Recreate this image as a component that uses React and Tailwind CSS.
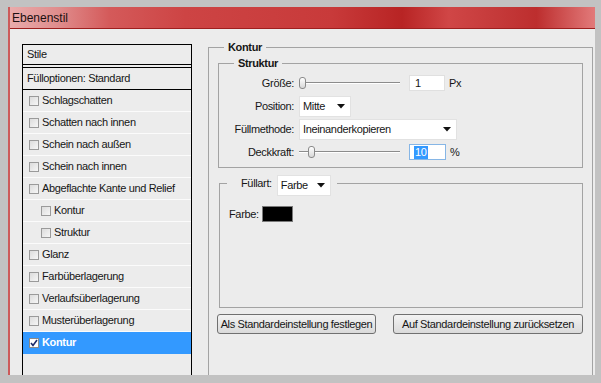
import React from "react";

const txt = "text-[11px] tracking-[-0.35px] text-[#161616]";

function Box({ checked }) {
  if (checked) {
    return (
      <span className="w-[10px] h-[10px] border border-[#8a8a8a] bg-white flex items-center justify-center shrink-0">
        <svg width="8" height="8" viewBox="0 0 8 8">
          <path d="M1 4 L3 6.5 L7 1" stroke="#1b2a6b" strokeWidth="1.6" fill="none" />
        </svg>
      </span>
    );
  }
  return (
    <span className="w-[10px] h-[10px] border border-[#9a9a9a] bg-gradient-to-br from-[#dcdcdc] to-[#f6f6f6] shrink-0" />
  );
}

function StyleRow({ label, indent, selected }) {
  return (
    <div
      className={`h-[22px] flex items-center gap-[3px] border-b ${
        selected ? "bg-[#3399ff] border-[#3399ff] text-white font-bold" : "border-[#fbfbfb] text-[#161616]"
      } ${indent ? "pl-[18px]" : "pl-[6px]"} text-[11px] tracking-[-0.35px]`}
    >
      <Box checked={selected} />
      <span>{label}</span>
    </div>
  );
}

function Arrow() {
  return (
    <svg width="8" height="5" viewBox="0 0 8 5" className="shrink-0">
      <path d="M0 0 H8 L4 4.5 Z" fill="#111" />
    </svg>
  );
}

function Select({ value, width }) {
  return (
    <div className={`${width} h-[21px] bg-white border border-[#e2e2e2] flex items-center justify-between pl-[3px] pr-[5px] ${txt}`}>
      <span>{value}</span>
      <Arrow />
    </div>
  );
}

function Slider({ thumb }) {
  return (
    <div className="relative w-[101px] h-[14px] flex items-center">
      <div className="w-full h-[2px] border-t border-[#8c8c8c] border-b border-b-white" />
      <div
        className="absolute top-[1px] w-[7px] h-[12px] rounded-[3px] border border-[#8a8a8a] bg-gradient-to-b from-white to-[#d8d8d8]"
        style={{ left: thumb }}
      />
    </div>
  );
}

function Label({ children }) {
  return <div className={`w-[75px] text-right ${txt}`}>{children}</div>;
}

export default function App() {
  const styles = [
    { label: "Schlagschatten" },
    { label: "Schatten nach innen" },
    { label: "Schein nach außen" },
    { label: "Schein nach innen" },
    { label: "Abgeflachte Kante und Relief" },
    { label: "Kontur", indent: true },
    { label: "Struktur", indent: true },
    { label: "Glanz" },
    { label: "Farbüberlagerung" },
    { label: "Verlaufsüberlagerung" },
    { label: "Musterüberlagerung" },
    { label: "Kontur", selected: true },
  ];

  return (
    <div className="w-[601px] h-[383px] bg-[#c2c2c2] pt-[7px] pl-[8px] pr-[8px] pb-[8px] flex font-['Liberation_Sans',Arial,sans-serif]">
      <div className="flex-1 flex flex-col border-l-2 border-[#cc5a5a]">
        {/* Titelleiste */}
        <div className="h-[22px] shrink-0 flex items-center pl-[2px] border-b border-[#9e1f1f] bg-[linear-gradient(to_right,#e9abab_0%,#e08e8e_8%,#d45a5a_17%,#cd4444_30%,#c83a3a_55%,#b82424_67%,#d04646_75%,#c53a3a_83%,#bd2e2e_90%,#e27a7a_100%)]">
          <span className="text-[12px] text-[#1c1010]">Ebenenstil</span>
        </div>

        <div className="flex-1 bg-[#ececec] flex pl-[12px] pr-[2px] pt-[11px] gap-[16px] min-h-0">
          {/* Stile-Liste */}
          <div className="w-[170px] mt-[4px] border-t border-l border-r border-black flex flex-col">
            <div className={`h-[20px] flex items-center pl-[4px] border-b border-black ${txt}`}>Stile</div>
            <div className={`h-[23px] mt-[2px] flex items-center pl-[4px] border-t border-b border-black ${txt}`}>
              Fülloptionen: Standard
            </div>
            {styles.map((s, i) => (
              <StyleRow key={i} {...s} />
            ))}
          </div>

          {/* Kontur */}
          <fieldset className="flex-1 min-w-0 border border-b-0 border-[#a3a3a3] m-0 p-0">
            <legend className={`ml-[15px] px-[4px] leading-[14px] font-bold ${txt}`}>Kontur</legend>
            <div className="px-[9px] flex flex-col">
              <fieldset className="mt-[2px] border border-[#a3a3a3] min-w-0 p-0">
                <legend className={`ml-[15px] px-[4px] leading-[14px] font-bold ${txt}`}>Struktur</legend>
                <div className="pt-[2px] pb-[4px] flex flex-col gap-[1px]">
                  <div className="h-[22px] flex items-center">
                    <Label>Größe:</Label>
                    <div className="ml-[5px]">
                      <Slider thumb={0} />
                    </div>
                    <div className={`ml-[9px] w-[36px] h-[16px] bg-white border border-[#e0e0e0] flex items-center pl-[5px] ${txt}`}>1</div>
                    <span className={`ml-[4px] ${txt}`}>Px</span>
                  </div>
                  <div className="h-[22px] flex items-center">
                    <Label>Position:</Label>
                    <div className="ml-[5px]">
                      <Select value="Mitte" width="w-[52px]" />
                    </div>
                  </div>
                  <div className="h-[22px] flex items-center">
                    <Label>Füllmethode:</Label>
                    <div className="ml-[5px]">
                      <Select value="Ineinanderkopieren" width="w-[158px]" />
                    </div>
                  </div>
                  <div className="h-[22px] flex items-center">
                    <Label>Deckkraft:</Label>
                    <div className="ml-[5px]">
                      <Slider thumb={9} />
                    </div>
                    <div className="ml-[9px] w-[37px] h-[16px] bg-white border border-[#86b6e6] flex items-center pl-[4px]">
                      <span className="bg-[#3399ff] text-white text-[11px] tracking-[-0.35px] px-[1px] leading-[13px]">10</span>
                    </div>
                    <span className={`ml-[4px] ${txt}`}>%</span>
                  </div>
                </div>
              </fieldset>

              <fieldset className="mt-[7px] h-[133px] border border-[#a3a3a3] min-w-0 p-0 ml-[1px]">
                <legend className="ml-[7px] pl-[14px] pr-[6px] flex items-start">
                  <span className={`leading-[14px] pt-[1px] ${txt}`}>Füllart:</span>
                  <div className="ml-[5px] mb-[-5px]">
                    <Select value="Farbe" width="w-[54px]" />
                  </div>
                </legend>
                <div className="pt-[15px] pl-[9px] flex items-center">
                  <span className={txt}>Farbe:</span>
                  <span className="ml-[3px] w-[31px] h-[16px] bg-black border border-[#7a7a7a]" />
                </div>
              </fieldset>

              <div className="mt-[6px] flex gap-[17px] -ml-[1px]">
                <button className={`w-[159px] h-[20px] rounded-[3px] border border-[#707070] bg-gradient-to-b from-[#f3f3f3] to-[#dadada] ${txt}`}>
                  Als Standardeinstellung festlegen
                </button>
                <button className={`w-[190px] h-[20px] rounded-[3px] border border-[#707070] bg-gradient-to-b from-[#f3f3f3] to-[#dadada] ${txt}`}>
                  Auf Standardeinstellung zurücksetzen
                </button>
              </div>
            </div>
          </fieldset>
        </div>
      </div>
    </div>
  );
}
